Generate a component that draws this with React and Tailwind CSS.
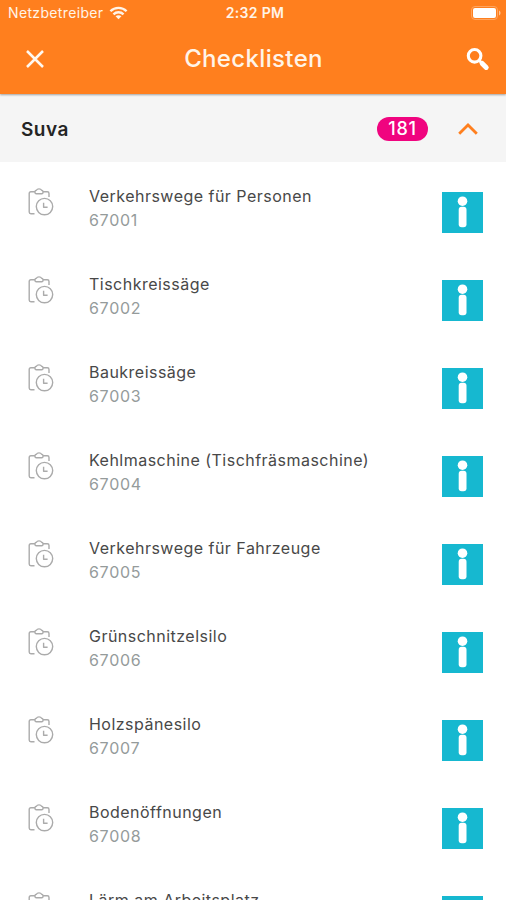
import React, { useState } from 'react';

const checklists = [
  { id: 67001, title: 'Verkehrswege für Personen' },
  { id: 67002, title: 'Tischkreissäge' },
  { id: 67003, title: 'Baukreissäge' },
  { id: 67004, title: 'Kehlmaschine (Tischfräsmaschine)' },
  { id: 67005, title: 'Verkehrswege für Fahrzeuge' },
  { id: 67006, title: 'Grünschnitzelsilo' },
  { id: 67007, title: 'Holzspänesilo' },
  { id: 67008, title: 'Bodenöffnungen' },
  { id: 67009, title: 'Lärm am Arbeitsplatz' },
];

const WifiIcon = () => (
  <svg width="19" height="14" viewBox="0 0 20 14" fill="none" stroke="#fff4e8" strokeWidth="2.5">
    <path d="M1.5 5.2C6.2 0.4 13.8 0.4 18.5 5.2" />
    <path d="M4.7 8.4C7.7 5.5 12.3 5.5 15.3 8.4" />
    <path d="M10 13.6L6.9 10.5C8.7 8.9 11.3 8.9 13.1 10.5Z" fill="#fff4e8" stroke="none" />
  </svg>
);

const BatteryIcon = () => (
  <svg width="31" height="14" viewBox="0 0 31 14">
    <rect x="0.5" y="0.5" width="26" height="13" rx="3.5" fill="none" stroke="#ffa45e" />
    <rect x="2" y="2" width="23" height="10" rx="2" fill="#fff" />
    <path d="M28 4.5C30 5.3 30 8.7 28 9.5Z" fill="#ffc593" />
  </svg>
);

const CloseIcon = () => (
  <svg width="18" height="18" viewBox="0 0 18 18" fill="none" stroke="#fff8f0" strokeWidth="2.5">
    <path d="M1 1L17 17M17 1L1 17" />
  </svg>
);

const SearchIcon = () => (
  <svg width="24" height="24" viewBox="0 0 24 24" fill="none" stroke="#fff">
    <circle cx="8.6" cy="8.8" r="6.3" strokeWidth="3.1" />
    <path d="M13 13.2L16 16.2" strokeWidth="3" />
    <path d="M16.2 16.4L20.2 20.4" strokeWidth="5" strokeLinecap="round" />
  </svg>
);

const ChevronUpIcon = () => (
  <svg width="20" height="12" viewBox="0 0 20 12" fill="none" stroke="#ff7f1e" strokeWidth="2.8">
    <path d="M1.2 10.8L10 2L18.8 10.8" />
  </svg>
);

const ChecklistIcon = () => (
  <svg width="26" height="28" viewBox="0 0 26 28" fill="none" stroke="#ababab" strokeWidth="1.4" strokeLinejoin="round">
    <path d="M7 3.8H2.9C1.8 3.8 1.2 4.4 1.2 5.5V24C1.2 25.1 1.8 25.7 2.9 25.7H6.5" />
    <path d="M15 3.8H19.3C20.4 3.8 21 4.4 21 5.5V9" />
    <path d="M8.3 5.8C7.3 5.8 7 5.4 7 4.5V3.6C7 2.8 7.5 2.3 8.4 2.2C8.9 1.2 9.6 0.9 11 0.9S13.1 1.2 13.6 2.2C14.5 2.3 15 2.8 15 3.6V4.5C15 5.4 14.7 5.8 13.7 5.8Z" />
    <circle cx="16.5" cy="18.6" r="8.2" />
    <path d="M15.6 14.8V19.2H19.6" />
  </svg>
);

const InfoIcon = () => (
  <svg width="41" height="41" viewBox="0 0 41 41">
    <rect width="41" height="41" fill="#16b8d0" />
    <circle cx="20.5" cy="9.2" r="4.8" fill="#fff" />
    <rect x="16.7" y="14.7" width="7.8" height="20.6" rx="3" fill="#fff" />
  </svg>
);

const ChecklistRow = ({ id, title }) => (
  <li className="flex h-[88px] shrink-0 items-start pl-7 pr-[23px]">
    <div className="mt-[26px] w-[61px]">
      <ChecklistIcon />
    </div>
    <div className="mt-[22px] flex-1 whitespace-nowrap">
      <div className="text-base leading-6 tracking-[0.48px] text-[#484848]">{title}</div>
      <div className="text-base leading-6 tracking-[0.7px] text-[#959b9b]">{id}</div>
    </div>
    <button className="mt-[30px]" aria-label="Info">
      <InfoIcon />
    </button>
  </li>
);

const App = () => {
  const [open, setOpen] = useState(true);

  return (
    <div className="flex h-[900px] w-full flex-col overflow-hidden bg-white font-['Inter',sans-serif]">
      <header className="z-10 h-[94px] shrink-0 bg-[#ff7f1e] text-[#fff4e8] shadow-[0_1px_2px_rgba(0,0,0,0.35)]">
        <div className="grid h-[26px] grid-cols-3 items-center pl-2 pr-1 text-sm">
          <div className="flex items-center gap-1.5">
            <span className="tracking-[0.35px]">Netzbetreiber</span>
            <WifiIcon />
          </div>
          <span className="text-center font-semibold tracking-[0.3px]">2:32 PM</span>
          <div className="flex justify-end">
            <BatteryIcon />
          </div>
        </div>
        <div className="grid h-[66px] grid-cols-[1fr_auto_1fr] items-center pl-[17px] pr-4">
          <button className="ml-[9px] justify-self-start" aria-label="Schliessen">
            <CloseIcon />
          </button>
          <h1 className="text-2xl font-medium tracking-[0.35px]">Checklisten</h1>
          <button className="justify-self-end" aria-label="Suchen">
            <SearchIcon />
          </button>
        </div>
      </header>

      <button
        className="flex h-[68px] shrink-0 items-center bg-[#f5f5f5] pl-[21px] pr-7 pt-0.5"
        onClick={() => setOpen(!open)}
      >
        <span className="flex-1 pt-0.5 text-left text-[19px] font-semibold tracking-[0.5px] text-[#242424]">Suva</span>
        <span className="flex h-6 w-[51px] items-center justify-center rounded-full bg-[#f0047f] text-lg font-medium tracking-[0.8px] text-white">
          181
        </span>
        <span className="ml-[30px]">
          <ChevronUpIcon />
        </span>
      </button>

      {open && (
        <ul className="flex flex-col">
          {checklists.map((item) => (
            <ChecklistRow key={item.id} {...item} />
          ))}
        </ul>
      )}
    </div>
  );
};

export default App;
